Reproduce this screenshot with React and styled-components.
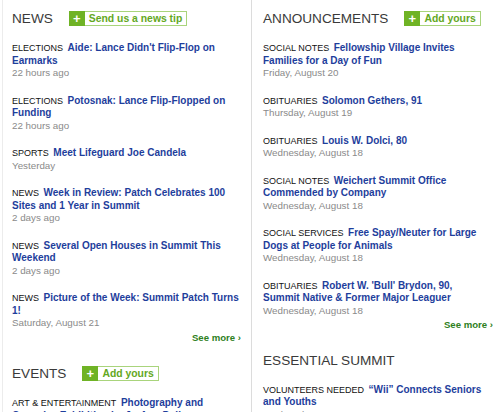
import React from "react";
import styled, { createGlobalStyle } from "styled-components";

const Global = createGlobalStyle`
  html, body { margin: 0; padding: 0; background: #fff; }
  body { font-family: "Liberation Sans", Arial, Helvetica, sans-serif; -webkit-font-smoothing: antialiased; }
`;

const Page = styled.div`
  display: grid;
  grid-template-columns: 249px 1fr;
  width: 500px;
  height: 412px;
  overflow: hidden;
  margin-left: 2px;
  border-left: 1px solid #ececec;
  box-sizing: border-box;
`;

const Column = styled.div`
  padding: 11px ${(p) => p.$pr}px 0 ${(p) => p.$pl}px;
  border-right: ${(p) => (p.$divider ? "1px solid #dcdcdc" : "none")};
  display: flex;
  flex-direction: column;
  min-width: 0;
`;

const Section = styled.section`
  display: flex;
  flex-direction: column;
  & + & { margin-top: 21.5px; }
`;

const HeadRow = styled.div`
  display: flex;
  align-items: center;
  gap: 16px;
  height: 15px;
  margin-bottom: ${(p) => p.$mb}px;
`;

const Heading = styled.h2`
  margin: 0;
  font-size: 13.6px;
  font-weight: normal;
  color: #3a3a3a;
  line-height: 15px;
  white-space: nowrap;
`;

const AddButton = styled.a`
  display: flex;
  height: 15px;
  text-decoration: none;
  cursor: pointer;
`;

const Plus = styled.span`
  width: 16px;
  height: 15px;
  background: #6fb325;
  color: #fff;
  font-weight: bold;
  font-size: 13px;
  line-height: 15px;
  text-align: center;
`;

const AddLabel = styled.span`
  display: flex;
  align-items: center;
  padding: 0 4px 0 4px;
  border: 1px solid #a9d47c;
  border-left: none;
  box-sizing: border-box;
  height: 15px;
  color: #63a81e;
  font-weight: bold;
  font-size: 10.4px;
  white-space: nowrap;
`;

const List = styled.div`
  display: flex;
  flex-direction: column;
  gap: 15px;
  padding-right: ${(p) => p.$pr || 0}px;
`;

const Item = styled.div`
  font-size: 9px;
  line-height: 12.5px;
`;

const Category = styled.span`
  font-size: 9px;
  color: #111;
  text-transform: uppercase;
  margin-right: 2px;
`;

const Title = styled.a`
  font-size: 10px;
  font-weight: bold;
  color: #1e3e9c;
  text-decoration: none;
`;

const Date = styled.div`
  font-size: 9.8px;
  color: #8a8a8a;
`;

const SeeMore = styled.a`
  align-self: flex-end;
  margin-top: 2px;
  line-height: 12.5px;
  font-size: 9.6px;
  font-weight: bold;
  color: #2f7f1d;
  text-decoration: none;
  white-space: nowrap;
`;

const news = [
  ["Elections", "Aide: Lance Didn't Flip-Flop on Earmarks", "22 hours ago"],
  ["Elections", "Potosnak: Lance Flip-Flopped on Funding", "22 hours ago"],
  ["Sports", "Meet Lifeguard Joe Candela", "Yesterday"],
  ["News", "Week in Review: Patch Celebrates 100 Sites and 1 Year in Summit", "2 days ago"],
  ["News", "Several Open Houses in Summit This Weekend", "2 days ago"],
  ["News", "Picture of the Week: Summit Patch Turns 1!", "Saturday, August 21"],
];

const announcements = [
  ["Social Notes", "Fellowship Village Invites Families for a Day of Fun", "Friday, August 20"],
  ["Obituaries", "Solomon Gethers, 91", "Thursday, August 19"],
  ["Obituaries", "Louis W. Dolci, 80", "Wednesday, August 18"],
  ["Social Notes", "Weichert Summit Office Commended by Company", "Wednesday, August 18"],
  ["Social Services", "Free Spay/Neuter for Large Dogs at People for Animals", "Wednesday, August 18"],
  ["Obituaries", "Robert W. 'Bull' Brydon, 90, Summit Native & Former Major Leaguer", "Wednesday, August 18"],
];

const events = [
  ["Art & Entertainment", "Photography and Ceramics Exhibition by Jo-Ann Poll", "Wednesday, August 25"],
];

const essential = [
  ["Volunteers Needed", "\u201cWii\u201d Connects Seniors and Youths", "Wednesday, August 18"],
];

function Entries({ items, pr }) {
  return (
    <List $pr={pr}>
      {items.map(([cat, title, date], i) => (
        <Item key={i}>
          <Category>{cat}</Category> <Title href="#">{title}</Title>
          <Date>{date}</Date>
        </Item>
      ))}
    </List>
  );
}

function Head({ title, action, mb }) {
  return (
    <HeadRow $mb={mb}>
      <Heading>{title}</Heading>
      {action && (
        <AddButton href="#">
          <Plus>+</Plus>
          <AddLabel>{action}</AddLabel>
        </AddButton>
      )}
    </HeadRow>
  );
}

export default function App() {
  return (
    <>
      <Global />
      <Page>
        <Column $divider $pl={9} $pr={10}>
          <Section>
            <Head title="NEWS" action="Send us a news tip" mb={16} />
            <Entries items={news} />
            <SeeMore href="#">See more ›</SeeMore>
          </Section>
          <Section>
            <Head title="EVENTS" action="Add yours" mb={16.5} />
            <Entries items={events} />
          </Section>
        </Column>
        <Column $pl={11} $pr={9}>
          <Section>
            <Head title="ANNOUNCEMENTS" action="Add yours" mb={16} />
            <Entries items={announcements} pr={10} />
            <SeeMore href="#">See more ›</SeeMore>
          </Section>
          <Section>
            <Head title="ESSENTIAL SUMMIT" mb={15.5} />
            <Entries items={essential} pr={10} />
          </Section>
        </Column>
      </Page>
    </>
  );
}
